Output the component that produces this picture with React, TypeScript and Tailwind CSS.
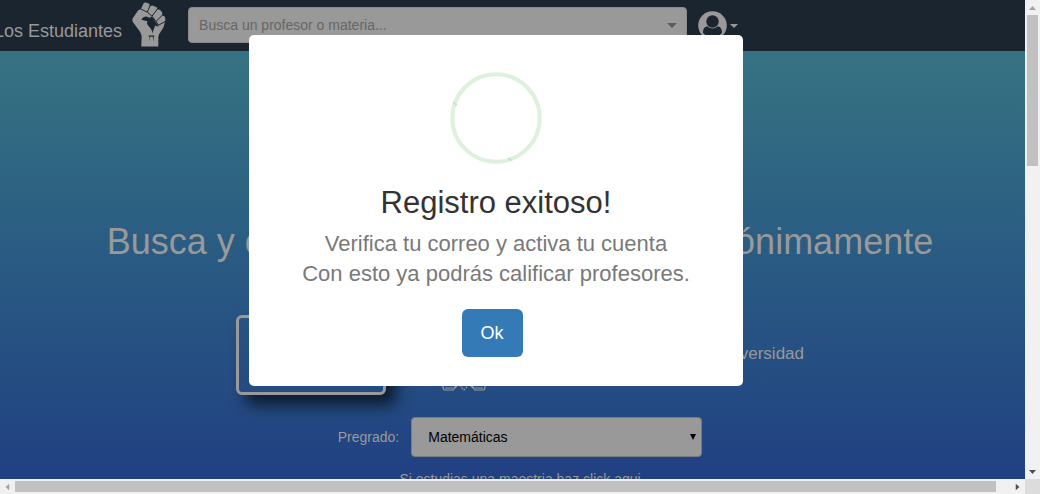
import React from "react";

function FistLogo() {
  return (
    <svg viewBox="0 0 102 134" className="h-[45px] w-[34px] shrink-0" fill="#999999" aria-hidden="true">
      <path d="M2 49L18 25 27 20 35 3Q38 0 42 1L51 5Q55 8 53 12L62 10 74 15Q78 18 76 22L84 23 90 30Q92 34 90 39L97 42Q101 47 100 54L95 74 89 84Q81 94 79 104V133H28L29 102Q28 94 22 86L2 59Q0 54 2 49Z" />
      <g fill="none" stroke="#1b2530" strokeWidth="3" strokeLinejoin="round">
        <path d="M25 20L46 30 55 8" />
        <path d="M46 30L60 42 78 18" />
        <path d="M60 42L72 58 93 37" />
        <path d="M72 58L80 69 99 58" />
      </g>
      <path
        fill="#1b2530"
        d="M28 53Q34 43 43 43L52 47 59 44 64 49 72 62 81 72Q74 74 70 69 65 80 61 94 60 84 56 79L49 71Q43 64 46 57Z"
      />
      <path fill="#1b2530" d="M49 100H68L65 104 66 118 62 104H54L53 118 52 104Z" />
    </svg>
  );
}

function Caret({ className }: { className: string }) {
  return (
    <svg viewBox="0 0 10 5" preserveAspectRatio="none" className={className} fill="currentColor" aria-hidden="true">
      <path d="M0 0h10L5 5z" />
    </svg>
  );
}

function Header() {
  return (
    <header className="flex h-[51px] shrink-0 items-start bg-[#1b2530] text-[#999999]">
      <a href="#" className="-ml-1.5 mt-0.5 flex shrink-0 items-center gap-2.5">
        <span className="whitespace-nowrap pt-3 text-lg leading-7">Los Estudiantes</span>
        <FistLogo />
      </a>
      <div className="relative ml-[22px] mt-[7px] w-[499px]">
        <input
          type="text"
          aria-label="Busca un profesor o materia..."
          placeholder="Busca un profesor o materia..."
          className="block h-9 w-full rounded border border-[#8a8a8a] bg-[#999999] px-2.5 text-sm placeholder:text-[#666666]"
        />
        <Caret className="absolute right-2.5 top-4 h-[5px] w-2.5 text-[#5c5c5c]" />
      </div>
      <button type="button" aria-label="Usuario" className="ml-[11px] mt-[11px] flex items-center gap-[3px]">
        <svg viewBox="0 0 29 29" className="size-[29px]" aria-hidden="true">
          <circle cx="14.5" cy="14.5" r="14.3" fill="#999999" />
          <circle cx="14.5" cy="10.5" r="6.2" fill="#1b2530" />
          <path d="M5 22c0-5 2-6.500 4.500-6.500 3 2.600 7 2.600 10 0 2.500 0 4.500 1.500 4.500 6.500-5 5-14 5-19 0z" fill="#1b2530" />
        </svg>
        <Caret className="h-1 w-2" />
      </button>
    </header>
  );
}

function HandsIcon() {
  return (
    <svg viewBox="0 0 44 40" className="h-10 w-11" fill="none" stroke="#999999" strokeWidth="1.2" aria-hidden="true">
      <path d="M1 28v8q0 3 2 3h8l4-4-4-6zM2 34h9M3 37h8" />
      <path d="M43 28v8q0 3-2 3h-8l-4-4 4-6zM42 34h-9M41 37h-8" />
      <path d="M12 37l4-4M32 37l-4-4" />
      <path strokeDasharray="2 1" d="M18 34l2 3 2 2 2-2 2-3M20 34h4" />
    </svg>
  );
}

function Search() {
  return (
    <main className="flex min-h-0 flex-1 flex-col items-center overflow-hidden bg-linear-to-b from-[#367382] to-[#214082] pl-[15px] text-[#999999]">
      <h1 className="mt-[171px] shrink-0 whitespace-nowrap text-4xl leading-10">
        Busca y conoce cursos y profesores anónimamente
      </h1>
      <section className="mt-[53px] flex w-[568px] shrink-0 items-center gap-14">
        <div className="h-20 w-[150px] rounded-md border-3 border-[#999999] shadow-[10px_10px_15px_rgba(0,0,0,0.65)]" />
        <div className="self-end pb-1">
          <HandsIcon />
        </div>
        <p className="ml-auto pb-0.5 text-[17px] leading-6">Selecciona tu universidad</p>
      </section>
      <div className="mt-[22px] flex shrink-0 items-center gap-3 text-sm">
        <label htmlFor="pregrado">Pregrado:</label>
        <div className="relative w-[291px]">
          <select
            id="pregrado"
            className="block h-10 w-full appearance-none rounded border border-[#7a7a7a] bg-[#999999] px-4 text-sm text-black"
          >
            <option>Matemáticas</option>
          </select>
          <Caret className="pointer-events-none absolute right-1.5 top-[17px] h-[6px] w-[6px] text-black" />
        </div>
      </div>
      <a href="#" className="mt-3 shrink-0 text-sm leading-5">
        Si estudias una maestria haz click aqui
      </a>
    </main>
  );
}

function SuccessDialog() {
  return (
    <div className="absolute inset-0 flex items-start justify-center pr-12 pt-[35px]">
      <div
        role="dialog"
        aria-labelledby="dialog-title"
        className="flex w-[494px] flex-col items-center rounded-[5px] bg-white pb-[29px] pt-[37px] text-center"
      >
        <svg viewBox="0 0 92 92" className="size-[92px]" fill="none" aria-hidden="true">
          <circle cx="46" cy="46" r="43.700" stroke="#def1de" strokeWidth="4" />
          <path d="M3.500 30.500l3 2.500M58.500 86l3 2.500" stroke="#a5d6a7" strokeWidth="1.500" strokeDasharray="1 .6" />
        </svg>
        <h2 id="dialog-title" className="mt-[19px] text-[31px] leading-10 text-[#333333]">
          Registro exitoso!
        </h2>
        <p className="mt-1.5 text-[22px] leading-[30px] text-[#797979]">
          Verifica tu correo y activa tu cuenta
          <br />
          Con esto ya podrás calificar profesores.
        </p>
        <button type="button" className="mr-2 mt-5 h-12 w-[61px] rounded-md bg-[#337ab7] text-lg text-white">
          Ok
        </button>
      </div>
    </div>
  );
}

function VerticalScrollbar() {
  return (
    <div className="flex w-[15px] shrink-0 flex-col items-center bg-[#f1f1f1]" aria-hidden="true">
      <div className="flex h-[15px] items-center">
        <Caret className="h-1 w-[7px] rotate-180 text-[#a3a3a3]" />
      </div>
      <div className="h-[151px] w-[11px] bg-[#c1c1c1]" />
      <div className="mt-auto flex h-[15px] items-center">
        <Caret className="h-1 w-[7px] text-[#505050]" />
      </div>
    </div>
  );
}

function HorizontalScrollbar() {
  return (
    <div className="flex h-[15px] shrink-0 bg-[#f1f1f1]" aria-hidden="true">
      <div className="flex min-w-0 flex-1 items-center">
        <div className="flex w-[15px] justify-center">
          <Caret className="h-1 w-[7px] rotate-90 text-[#a3a3a3]" />
        </div>
        <div className="mr-[14px] h-[11px] flex-1 bg-[#c1c1c1]" />
        <div className="flex w-[15px] justify-center">
          <Caret className="h-1 w-[7px] -rotate-90 text-[#505050]" />
        </div>
      </div>
      <div className="w-[15px] bg-[#dcdcdc]" />
    </div>
  );
}

export default function App() {
  return (
    <div className="relative flex h-screen flex-col overflow-hidden font-['Liberation_Sans',Arial,sans-serif]">
      <div className="flex min-h-0 flex-1">
        <div className="flex min-w-0 flex-1 flex-col overflow-hidden">
          <Header />
          <Search />
        </div>
        <VerticalScrollbar />
      </div>
      <HorizontalScrollbar />
      <SuccessDialog />
    </div>
  );
}
